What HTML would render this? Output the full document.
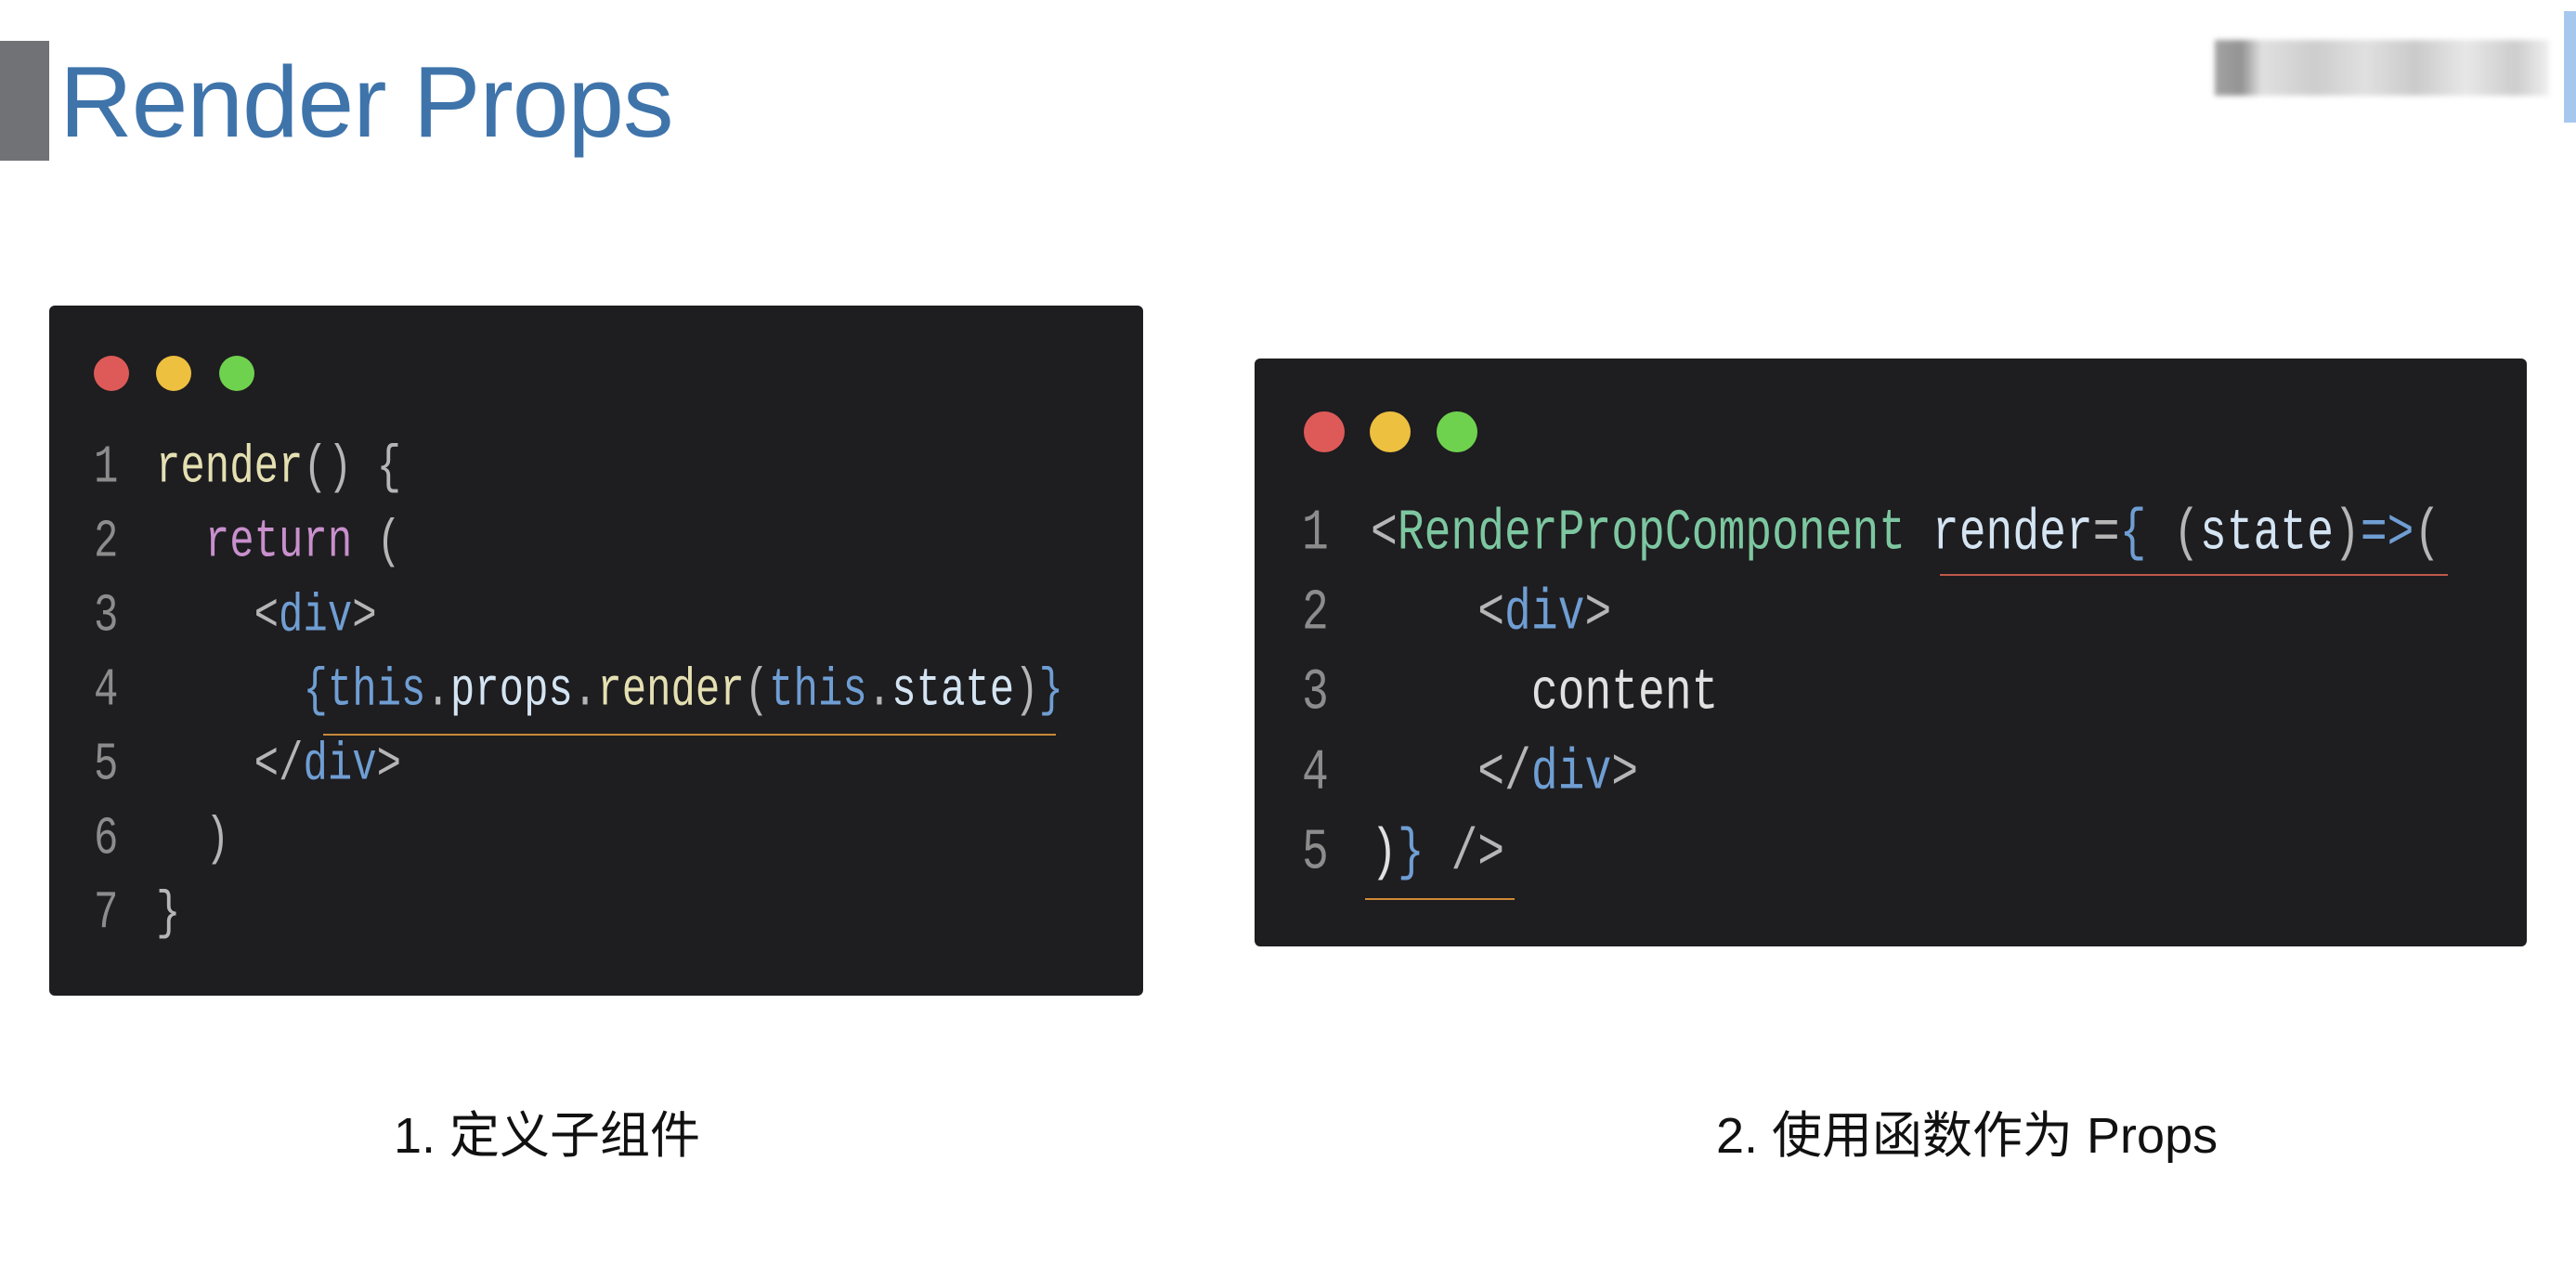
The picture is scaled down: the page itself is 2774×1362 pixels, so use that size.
<!DOCTYPE html>
<html><head><meta charset="utf-8"><style>
html,body{margin:0;padding:0;background:#fff;}
body{width:2774px;height:1362px;position:relative;overflow:hidden;font-family:"Liberation Sans","Noto Sans CJK SC",sans-serif;}
.abs{position:absolute;}
.card{position:absolute;background:#1e1d20;border-radius:6px;}
.dot{position:absolute;border-radius:50%;}
.ln{position:absolute;font-family:"Liberation Mono",monospace;white-space:pre;transform-origin:0 50%;line-height:1;}
.n{color:#8c8c8c;display:inline-block}
.c1 .n{width:67px}.c2 .n{width:74px}
.y{color:#e4e0b2}.p{color:#c890cc}.g{color:#b5b5b5}.b{color:#6f9ed3}.lb{color:#d4e4f2}.gr{color:#7cc7a0}.w{color:#e0e0e0}
</style></head><body>
<div class="abs" style="left:0;top:44px;width:53px;height:129px;background:#707276"></div>
<div class="abs" style="left:64px;top:45px;font-size:109px;color:#3f74ab;line-height:1.2;letter-spacing:-1px">Render Props</div>
<div class="abs" style="left:2385px;top:43px;width:360px;height:60px;background:linear-gradient(90deg,#999 0,#888 8%,#ddd 14%,#c8c8c8 30%,#ddd 45%,#c5c5c5 60%,#e5e5e5 75%,#c8c8c8 90%,#eee 100%);filter:blur(3px);opacity:.9"></div>
<div class="abs" style="left:2761px;top:12px;width:13px;height:120px;background:#a7c8ee"></div>

<div class="card" style="left:53px;top:329px;width:1178px;height:743px;"></div>
<div class="dot" style="left:101px;top:383px;width:38px;height:38px;background:#de5a58"></div>
<div class="dot" style="left:168px;top:383px;width:38px;height:38px;background:#eec03f"></div>
<div class="dot" style="left:236px;top:383px;width:38px;height:38px;background:#6fd24e"></div>

<div class="c1">
<div class="ln" style="left:101px;top:482px;font-size:44px;transform:scaleY(1.3)"><span class="n">1</span><span class="y">render</span><span class="g">() {</span></div>
<div class="ln" style="left:101px;top:562px;font-size:44px;transform:scaleY(1.3)"><span class="n">2</span>  <span class="p">return</span> <span class="g">(</span></div>
<div class="ln" style="left:101px;top:642px;font-size:44px;transform:scaleY(1.3)"><span class="n">3</span>    <span class="g">&lt;</span><span class="b">div</span><span class="g">&gt;</span></div>
<div class="ln" style="left:101px;top:722px;font-size:44px;transform:scaleY(1.3)"><span class="n">4</span>      <span class="b">{this</span><span class="g">.</span><span class="lb">props</span><span class="g">.</span><span class="y">render</span><span class="g">(</span><span class="b">this</span><span class="g">.</span><span class="lb">state</span><span class="g">)</span><span class="b">}</span></div>
<div class="ln" style="left:101px;top:802px;font-size:44px;transform:scaleY(1.3)"><span class="n">5</span>    <span class="g">&lt;/</span><span class="b">div</span><span class="g">&gt;</span></div>
<div class="ln" style="left:101px;top:882px;font-size:44px;transform:scaleY(1.3)"><span class="n">6</span>  <span class="g">)</span></div>
<div class="ln" style="left:101px;top:962px;font-size:44px;transform:scaleY(1.3)"><span class="n">7</span><span class="g">}</span></div>
</div>
<div class="abs" style="left:348px;top:790px;width:789px;height:2px;background:#c8893a"></div>

<div class="card" style="left:1351px;top:386px;width:1370px;height:633px;"></div>
<div class="dot" style="left:1404px;top:443px;width:44px;height:44px;background:#de5a58"></div>
<div class="dot" style="left:1475px;top:443px;width:44px;height:44px;background:#eec03f"></div>
<div class="dot" style="left:1547px;top:443px;width:44px;height:44px;background:#6fd24e"></div>

<div class="c2">
<div class="ln" style="left:1402px;top:551px;font-size:48px;transform:scaleY(1.3)"><span class="n">1</span><span class="g">&lt;</span><span class="gr">RenderPropComponent</span> <span class="lb">render</span><span class="g">=</span><span class="b">{</span> <span class="g">(</span><span class="lb">state</span><span class="g">)</span><span class="b">=&gt;</span><span class="g">(</span></div>
<div class="ln" style="left:1402px;top:637px;font-size:48px;transform:scaleY(1.3)"><span class="n">2</span>    <span class="g">&lt;</span><span class="b">div</span><span class="g">&gt;</span></div>
<div class="ln" style="left:1402px;top:723px;font-size:48px;transform:scaleY(1.3)"><span class="n">3</span>      <span class="w">content</span></div>
<div class="ln" style="left:1402px;top:809px;font-size:48px;transform:scaleY(1.3)"><span class="n">4</span>    <span class="g">&lt;/</span><span class="b">div</span><span class="g">&gt;</span></div>
<div class="ln" style="left:1402px;top:895px;font-size:48px;transform:scaleY(1.3)"><span class="n">5</span><span class="w">)</span><span class="b">}</span> <span class="g">/&gt;</span></div>
</div>
<div class="abs" style="left:2089px;top:618px;width:547px;height:2px;background:#c0584a"></div>
<div class="abs" style="left:1470px;top:967px;width:161px;height:2px;background:#d08a35"></div>

<div class="abs" style="left:424px;top:1188px;font-size:54px;color:#111;line-height:1.3;">1. 定义子组件</div>
<div class="abs" style="left:1848px;top:1188px;font-size:54px;color:#111;line-height:1.3;">2. 使用函数作为 Props</div>
</body></html>
